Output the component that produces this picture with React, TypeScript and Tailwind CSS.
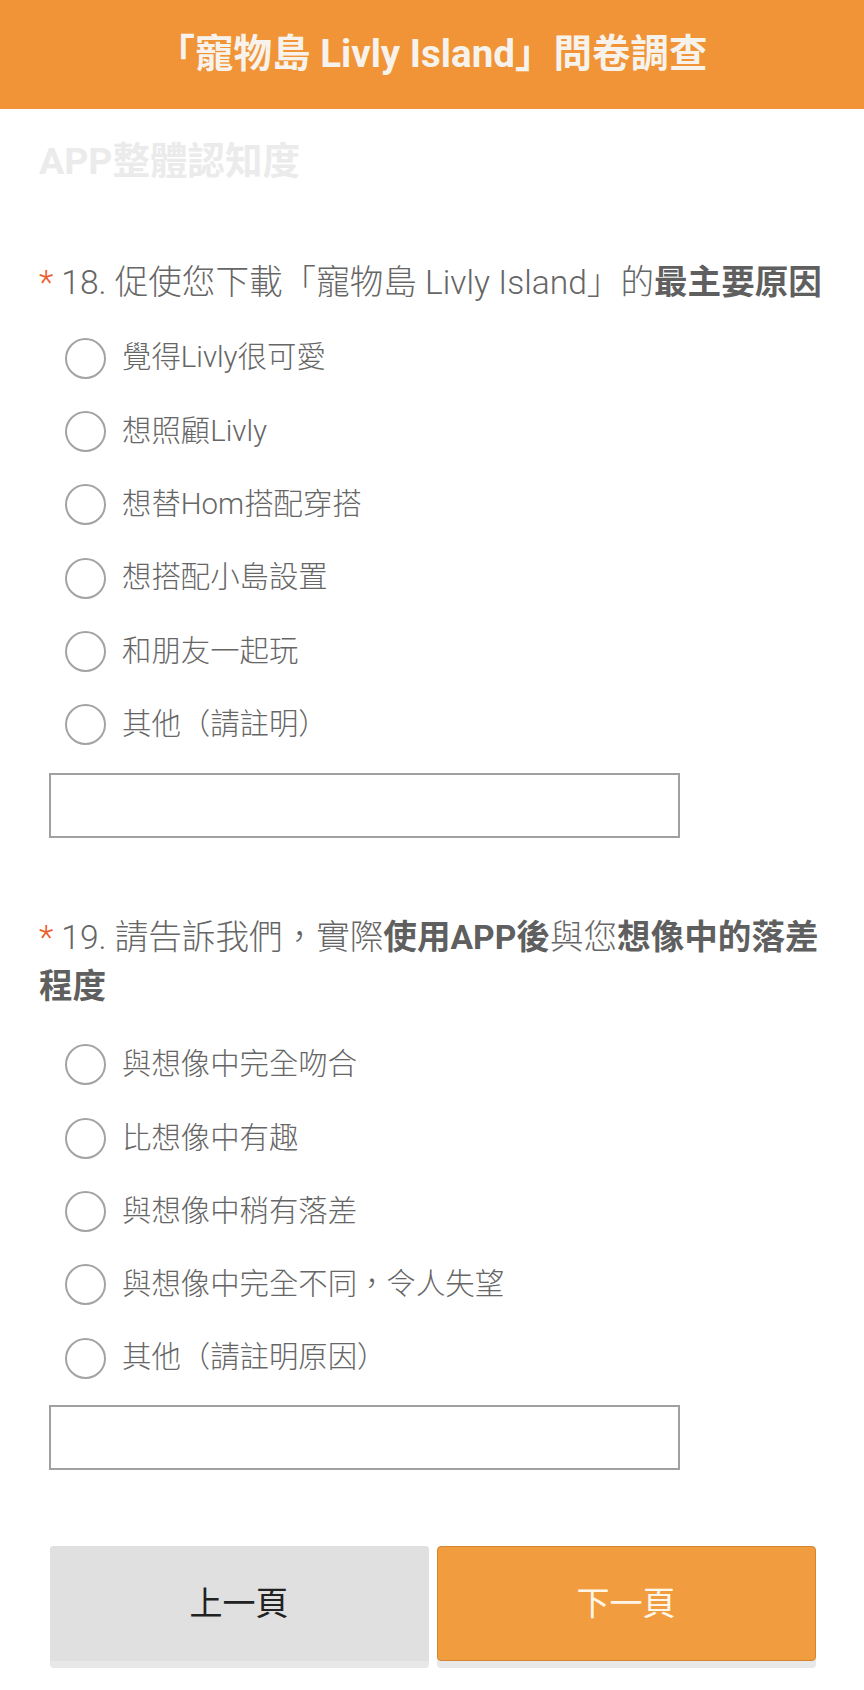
import React from "react";

const FONT = "Roboto, 'Noto Sans CJK TC', sans-serif";

function Radio({ label }: { label: string }) {
  return (
    <div className="flex h-[73.3px] items-center pl-[26px]">
      <span className="box-border block h-[41px] w-[41px] shrink-0 rounded-full border-2 border-[#a3a3a3] bg-white" />
      <span className="ml-[16px] text-[29.4px] font-light leading-none text-[#666666]">{label}</span>
    </div>
  );
}

function TextBox() {
  return <div className="ml-[9.5px] h-[65px] w-[631px] border-2 border-[#a0a0a0] bg-white" />;
}

export default function App() {
  const q18 = ["覺得Livly很可愛", "想照顧Livly", "想替Hom搭配穿搭", "想搭配小島設置", "和朋友一起玩", "其他（請註明）"];
  const q19 = ["與想像中完全吻合", "比想像中有趣", "與想像中稍有落差", "與想像中完全不同，令人失望", "其他（請註明原因）"];
  return (
    <div className="min-h-[1690px] w-[864px] bg-white" style={{ fontFamily: FONT }}>
      <div className="flex h-[109px] items-center justify-center bg-[#f09437]">
        <h1 className="text-[38.5px] font-bold leading-none text-[#f7f3ec]">「寵物島 Livly Island」問卷調查</h1>
      </div>
      <div className="px-[39px]">
        <div className="mt-[28px] text-[37.5px] font-bold leading-[48px] text-[#ebebeb]">APP整體認知度</div>

        <div className="mt-[73px] whitespace-nowrap text-[33.6px] font-light leading-[49px] text-[#666666]">
          <span className="mr-[8px] text-[#f05a28]">*</span>18. 促使您下載「寵物島 Livly Island」的
          <span className="font-bold text-[#5f5f5f]">最主要原因</span>
        </div>
        <div className="mt-[14.5px]">
          {q18.map((l) => (
            <Radio key={l} label={l} />
          ))}
        </div>
        <div className="mt-[11.5px]">
          <TextBox />
        </div>

        <div className="mt-[75px] whitespace-nowrap text-[33.6px] font-light leading-[49px] text-[#666666]">
          <span className="mr-[8px] text-[#f05a28]">*</span>19. 請告訴我們，實際
          <span className="font-bold text-[#5f5f5f]">使用APP後</span>與您
          <span className="font-bold text-[#5f5f5f]">想像中的落差</span>
          <br />
          <span className="font-bold text-[#5f5f5f]">程度</span>
        </div>
        <div className="mt-[17.5px]">
          {q19.map((l) => (
            <Radio key={l} label={l} />
          ))}
        </div>
        <div className="mt-[10.5px]">
          <TextBox />
        </div>

        <div className="ml-[10.5px] mt-[76px] flex w-[766px] gap-[8px]">
          <button className="flex h-[122px] flex-1 flex-col overflow-hidden rounded-[4px] bg-[#e8e8e8]">
            <span className="flex h-[115px] w-full items-center justify-center bg-[#e0e0e0] text-[33px] text-[#222222]">上一頁</span>
          </button>
          <button className="flex h-[122px] flex-1 flex-col overflow-hidden rounded-[4px] bg-[#e8e8e8]">
            <span className="box-border flex h-[115px] w-full items-center justify-center rounded-[4px] border border-[#d4862e] bg-[#f09c3f] text-[33px] text-[#fff6ea]">下一頁</span>
          </button>
        </div>
      </div>
    </div>
  );
}
